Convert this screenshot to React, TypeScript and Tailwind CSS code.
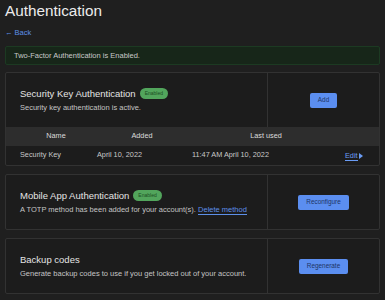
import React from 'react';

const font = { fontFamily: '"Liberation Sans", Arial, sans-serif' };

const Badge = () => (
  <span className="ml-[4px] inline-flex h-[11px] items-center rounded-full bg-[#52a55c] px-[5px] text-[5px] leading-none text-[#1b4d22]">
    Enabled
  </span>
);

const ActionButton = ({ label }: { label: string }) => (
  <button className="h-[15px] rounded-[2px] bg-[#5b8ef0] px-[8px] text-[6.4px] leading-none text-[#1d3566]">
    {label}
  </button>
);

interface MethodCardProps {
  title: string;
  enabled?: boolean;
  action: string;
  children: React.ReactNode;
  footer?: React.ReactNode;
}

const MethodCard: React.FC<MethodCardProps> = ({ title, enabled, action, children, footer }) => (
  <div className="rounded-[2px] border border-[#323232] bg-[#1c1c1c]">
    <div className="flex h-[54px]">
      <div className="flex flex-1 flex-col justify-center pl-[14px]">
        <div className="flex h-[12px] items-center text-[9.5px] leading-[12px] text-[#e4e4e4]">
          {title}
          {enabled && <Badge />}
        </div>
        <div className="mt-[3px] text-[7.5px] leading-[10px] text-[#c4c4c4]">{children}</div>
      </div>
      <div className="flex w-[112px] items-center justify-center border-l border-[#323232]">
        <ActionButton label={action} />
      </div>
    </div>
    {footer}
  </div>
);

const KeyTable = () => (
  <div>
    <div className="grid h-[19px] grid-cols-[100px_72px_176px_1fr] items-center bg-[#2d2d2d] text-center text-[7.3px] text-[#dcdcdc]">
      <span>Name</span>
      <span>Added</span>
      <span>Last used</span>
      <span></span>
    </div>
    <div className="grid h-[19px] grid-cols-[77px_95px_153px_1fr] items-center pl-[14px] text-[7.3px] text-[#c8c8c8]">
      <span>Security Key</span>
      <span>April 10, 2022</span>
      <span>11:47 AM April 10, 2022</span>
      <span className="flex items-center text-[#6a9cf5]">
        <span className="border-b border-[#6a9cf5] leading-[9px]">Edit</span>
        <svg width="4" height="6" viewBox="0 0 4 6" className="ml-[1px]">
          <path d="M0 0 L4 3 L0 6 Z" fill="#6a9cf5" />
        </svg>
      </span>
    </div>
  </div>
);

export default function App() {
  return (
    <div className="min-h-[300px] w-[385px] bg-[#1f1f1f] px-[5px]" style={font}>
      <h1 className="pt-[2px] text-[15.3px] leading-[18px] text-[#ececec]">Authentication</h1>
      <div className="mt-[7px] flex h-[12px] items-center text-[7.5px] text-[#5d8fe8]">
        <span className="mr-[2px]">←</span>Back
      </div>
      <div className="mt-[7px] flex h-[19px] items-center rounded-[2px] border border-[#1c3a22] bg-[#172619] pl-[8px] text-[7.5px] text-[#c9c9c9]">
        Two-Factor Authentication is Enabled.
      </div>

      <div className="mt-[7px] flex flex-col gap-[8px]">
        <MethodCard title="Security Key Authentication" enabled action="Add" footer={<KeyTable />}>
          Security key authentication is active.
        </MethodCard>
        <MethodCard title="Mobile App Authentication" enabled action="Reconfigure">
          A TOTP method has been added for your account(s).{' '}
          <span className="border-b border-[#5d8fe8] text-[#5d8fe8]">Delete method</span>
        </MethodCard>
        <MethodCard title="Backup codes" action="Regenerate">
          Generate backup codes to use if you get locked out of your account.
        </MethodCard>
      </div>
    </div>
  );
}
